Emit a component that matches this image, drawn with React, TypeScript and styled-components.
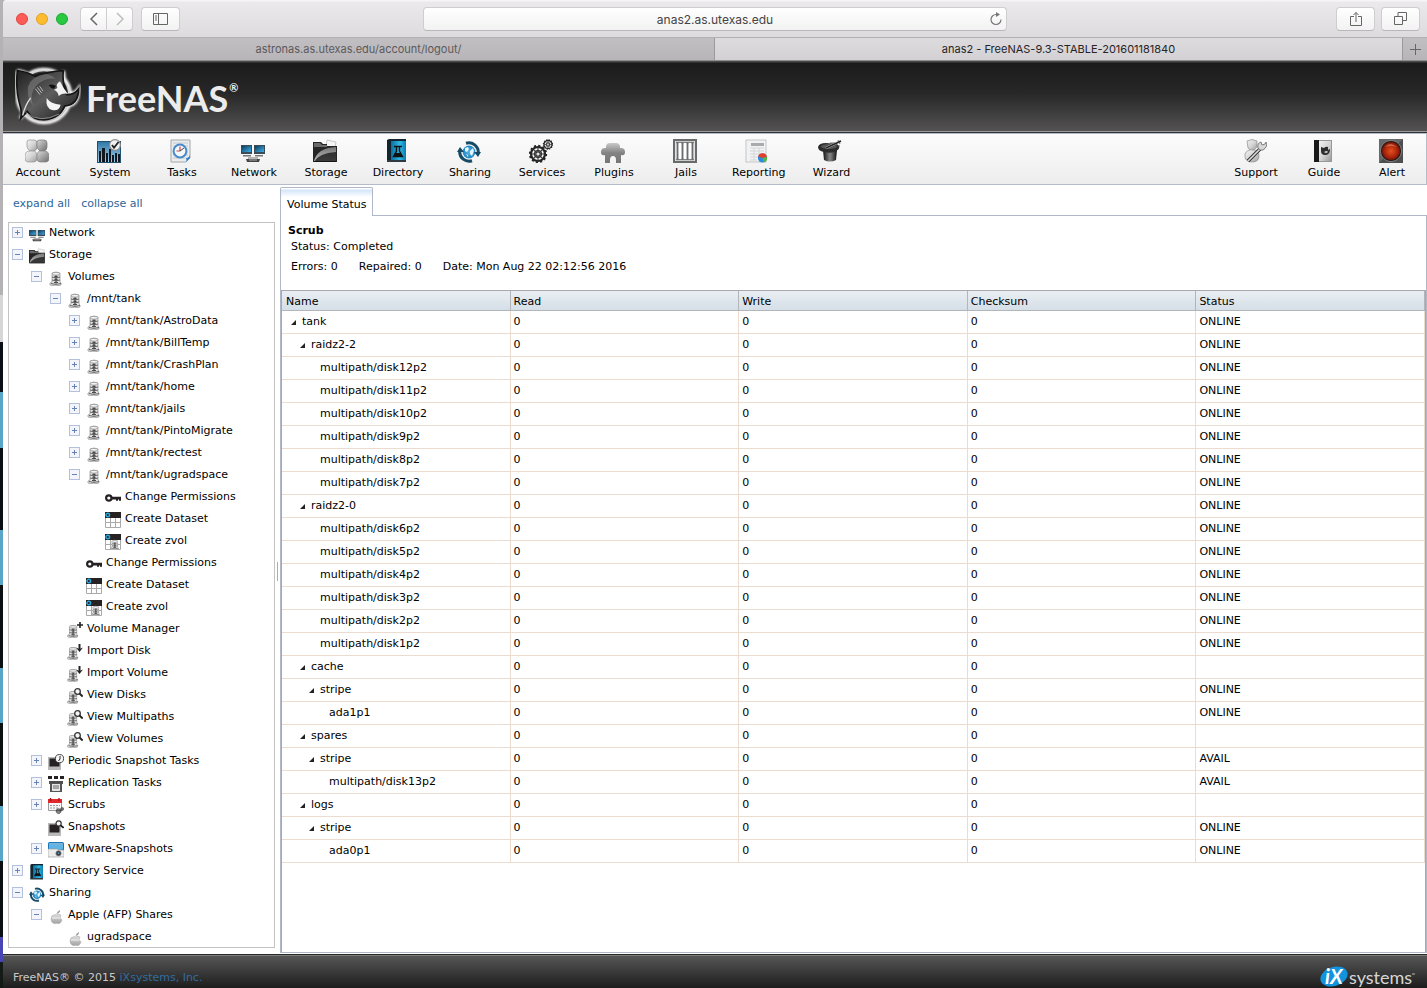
import React from 'react';
import styled, { createGlobalStyle } from 'styled-components';

const GlobalStyle = createGlobalStyle`
  * { box-sizing: border-box; }
  html, body { margin: 0; padding: 0; }
  body { font-family: Verdana, "DejaVu Sans", sans-serif; font-size: 11px; line-height: 15px; color: #000; background: #fff; }
  button, input { font: inherit; color: inherit; }
  a { text-decoration: none; }
`;

/* ---------- shell ---------- */

const Desktop = styled.div`
  display: flex;
  height: 100vh;
  min-height: 600px;
  padding-left: 3px;
  background: linear-gradient(
    #b4b2b4 0 295px, #d6d6d6 295px 342px, #0d0f18 342px 392px, #5aa6c8 392px 448px,
    #0b1017 448px 530px, #5aa6c8 530px 585px, #0b1012 585px 668px, #5aa6c8 668px 723px,
    #0b1210 723px 806px, #5aa6c8 806px 861px, #0b1012 861px 937px, #4a45b5 937px 962px, #141a16 962px
  );
`;

const Window = styled.div`
  flex: 1;
  min-width: 0;
  display: flex;
  flex-direction: column;
  background: #fff;
  border-top-left-radius: 4px;
  overflow: hidden;
`;

/* ---------- browser chrome ---------- */

const BrowserBar = styled.div`
  display: grid;
  grid-template-columns: 12fr 17fr 12fr;
  align-items: center;
  height: 38px;
  flex: none;
  padding: 0 7px;
  border-bottom: 1px solid #b3b0b4;
  background: linear-gradient(#f6f4f6 0 1px, #ebe9eb 2px, #dddbdd);
`;

const ChromeGroup = styled.div<{ $end?: boolean }>`
  display: flex;
  align-items: center;
  gap: ${(p) => (p.$end ? '6px' : '8px')};
  padding-left: ${(p) => (p.$end ? '0' : '6px')};
  justify-content: ${(p) => (p.$end ? 'flex-end' : 'flex-start')};
`;

const Light = styled.button<{ $fill: string; $edge: string }>`
  width: 12px;
  height: 12px;
  padding: 0;
  border-radius: 50%;
  border: 1px solid ${(p) => p.$edge};
  background: ${(p) => p.$fill};
`;

const NavPair = styled.div`
  display: flex;
  margin-left: 4px;
`;

const ChromeButton = styled.button<{ $w: number; $side?: 'left' | 'right' }>`
  display: flex;
  align-items: center;
  justify-content: center;
  width: ${(p) => p.$w}px;
  height: 24px;
  padding: 0;
  border: 1px solid #cfcdcf;
  border-bottom-color: #b9b7b9;
  border-left-width: ${(p) => (p.$side === 'right' ? 0 : 1)}px;
  border-radius: ${(p) => (p.$side === 'left' ? '4px 0 0 4px' : p.$side === 'right' ? '0 4px 4px 0' : '4px')};
  background: linear-gradient(#fff, #f3f2f3);
`;

const AddressBox = styled.div`
  display: grid;
  align-items: center;
  position: relative;
`;

const Address = styled.input`
  width: 100%;
  height: 24px;
  padding: 1px 28px 0;
  text-align: center;
  font-family: Inter, sans-serif;
  font-size: 12px;
  color: #454345;
  border: 1px solid #cfcdcf;
  border-bottom-color: #b9b7b9;
  border-radius: 4px;
  background: linear-gradient(#fff, #f3f2f3);
`;

const Reload = styled.button`
  position: absolute;
  right: 4px;
  display: flex;
  padding: 0;
  border: 0;
  background: none;
`;

const BrowserTabs = styled.div`
  display: grid;
  grid-template-columns: 1fr 1fr;
  height: 23px;
  flex: none;
  font-family: Inter, sans-serif;
  font-size: 11px;
  border-bottom: 1px solid #8e8c8e;
`;

const TabGroup = styled.div`
  display: grid;
  grid-template-columns: 1fr 24px;
`;

const BrowserTab = styled.button<{ $active?: boolean }>`
  display: flex;
  align-items: center;
  justify-content: center;
  padding: 0;
  border: 0;
  border-right: 1px solid #9b999b;
  color: ${(p) => (p.$active ? '#262426' : '#5b595b')};
  background: ${(p) => (p.$active ? 'linear-gradient(#dddbdd, #d3d1d3)' : 'linear-gradient(#c2bfc2, #b8b5b8)')};
`;

const NewTab = styled(BrowserTab)`
  border-right: 0;
`;

/* ---------- application header ---------- */

const Header = styled.header`
  display: flex;
  align-items: center;
  gap: 5px;
  height: 72px;
  flex: none;
  padding-left: 12px;
  border-bottom: 1px solid #333;
  background: linear-gradient(#4a4a4a 0 1px, #1b1b1b 2px, #272727 45%, #545252 70px, #9a9a9a 70px);
`;

const Brand = styled.div`
  display: flex;
  align-items: flex-start;
  padding-top: 2px;
  font-family: Lato, sans-serif;
  font-size: 36px;
  line-height: 48px;
  font-weight: 700;
  color: #ececec;
`;

const Registered = styled.sup`
  font-size: 11px;
  line-height: 12px;
  padding: 8px 0 0 1px;
`;

const Toolbar = styled.nav`
  display: flex;
  justify-content: space-between;
  height: 52px;
  flex: none;
  padding-right: 1px;
  border: 1px solid #b5bcc9;
  border-left: 0;
  background: linear-gradient(#fcfcfc, #ededed);
`;

const ToolGroup = styled.div`
  display: flex;
  gap: 2px;
`;

const Tool = styled.button<{ $min: number }>`
  display: flex;
  flex-direction: column;
  align-items: center;
  gap: 2px;
  min-width: ${(p) => p.$min}px;
  padding: 5px 9px 0;
  border: 0;
  background: none;
`;

const ToolIcon = styled.span`
  display: flex;
  padding-right: 3px;
`;

/* ---------- sidebar ---------- */

const Main = styled.main`
  display: flex;
  flex: 1;
  min-height: 0;
`;

const Sidebar = styled.aside`
  display: flex;
  flex-direction: column;
  width: 272px;
  flex: none;
  padding: 11px 0 6px 5px;
`;

const TreeLinks = styled.div`
  display: flex;
  gap: 11px;
  padding: 0 5px 11px;
`;

const TreeLink = styled.a`
  color: #2b6699;
`;

const Tree = styled.ul`
  flex: 1;
  min-height: 0;
  margin: 0;
  padding: 0 0 0 3px;
  list-style: none;
  overflow: hidden;
  border: 1px solid #c3c3c3;
`;

const TreeRow = styled.li<{ $level: number }>`
  display: grid;
  grid-template-columns: 17px 16px 1fr;
  align-items: start;
  height: 22px;
  padding-top: 2px;
  padding-left: ${(p) => p.$level * 19}px;
`;

const Expando = styled.button`
  display: flex;
  width: 11px;
  margin-top: 2px;
  padding: 0;
  border: 0;
  background: none;
`;

const TreeIcon = styled.span`
  display: flex;
  grid-column: 2;
  padding-top: 1px;
`;

const TreeLabel = styled.span`
  grid-column: 3;
  padding-left: 4px;
  white-space: nowrap;
`;

const Splitter = styled.div`
  display: flex;
  align-items: center;
  width: 5px;
  flex: none;
  padding: 4px 0 0 2px;
  &::before {
    content: '';
    width: 1px;
    height: 19px;
    background: #a9acb8;
  }
`;

/* ---------- volume status ---------- */

const Content = styled.section`
  display: flex;
  flex-direction: column;
  flex: 1;
  min-width: 0;
  padding: 2px 0 1px;
`;

const PanelTab = styled.button`
  position: relative;
  align-self: flex-start;
  height: 29px;
  margin-bottom: -1px;
  padding: 4px 6px 0;
  border: 1px solid #b0b7c8;
  border-bottom: 0;
  border-radius: 2px 2px 0 0;
  background: linear-gradient(#fff 0 1px, #d3e5f8 2px, #fff 9px);
`;

const Panel = styled.div`
  display: flex;
  flex-direction: column;
  flex: 1;
  min-height: 0;
  border: 1px solid #b0b7c8;
`;

const Summary = styled.div`
  padding: 7px 7px 15px;
`;

const SummaryTitle = styled.h2`
  margin: 0;
  font-size: 11px;
  line-height: 16px;
`;

const SummaryLine = styled.div<{ $gap?: number }>`
  display: flex;
  gap: 21px;
  padding: ${(p) => p.$gap ?? 0}px 3px 0;
  line-height: 16px;
`;

const GridFrame = styled.div`
  flex: 1;
  min-height: 0;
  overflow: hidden;
  border: 1px solid #a9a9ad;
  border-bottom: 0;
`;

const Grid = styled.table`
  width: 100%;
  table-layout: fixed;
  border-collapse: separate;
  border-spacing: 0;
`;

const HeadCell = styled.th`
  padding: 3px 3px 1px;
  text-align: left;
  font-weight: 400;
  line-height: 15px;
  border-right: 1px solid #b2b6ba;
  border-bottom: 1px solid #b2b6ba;
  background: linear-gradient(#e9eef3, #d5dfe7);
  &:first-child { padding-left: 4px; }
`;

const Cell = styled.td`
  padding: 3px 3px 4px;
  line-height: 15px;
  height: 23px;
  border-right: 1px solid #ecdcd0;
  border-bottom: 1px solid #ecdcd0;
`;

const NameCell = styled.div<{ $level: number }>`
  display: grid;
  grid-template-columns: 11px 1fr;
  align-items: center;
  padding-left: ${(p) => 6 + p.$level * 9}px;
`;

const Twisty = styled.button`
  display: flex;
  padding: 2px 0 0;
  border: 0;
  background: none;
`;

const NameText = styled.span`
  grid-column: 2;
`;

/* ---------- footer ---------- */

const Footer = styled.footer`
  display: flex;
  justify-content: space-between;
  align-items: flex-end;
  height: 34px;
  flex: none;
  padding: 0 11px 0 10px;
  color: #c9c9c9;
  background: linear-gradient(#2a2a2a 0 1px, #7d7d7d 1px 2px, #565656 2px, #1d1d1d);
`;

const Copyright = styled.div`
  padding-bottom: 3px;
`;

const FooterLink = styled.a`
  color: #336c9f;
`;

const Vendor = styled.div`
  display: flex;
  align-items: flex-end;
`;

/* ---------- icons ---------- */

type IconName =
  | 'account' | 'system' | 'tasks' | 'network' | 'storage' | 'directory' | 'sharing' | 'services'
  | 'plugins' | 'jails' | 'reporting' | 'wizard' | 'support' | 'guide' | 'alert'
  | 'disk' | 'diskAdd' | 'diskImport' | 'diskView' | 'key' | 'dataset' | 'zvol'
  | 'periodic' | 'replication' | 'scrubs' | 'snapshots' | 'vmware' | 'apple';

const diskShape = (
  <g>
    <path d="M3 14v-2l2-1v-9q4-2 8 0v9l1 1v2q-5 2-11 0z" fill="#e3e3e3" stroke="#9a9a9a" strokeWidth=".8" />
    <ellipse cx="9" cy="2.8" rx="4" ry="1.3" fill="#fafafa" stroke="#8b8b8b" strokeWidth=".7" />
    <path d="M5 6q4 1.8 8 0M5 9q4 1.8 8 0M4 12.5q5 1.8 10 0" stroke="#555" strokeWidth=".9" fill="none" />
    <path d="M9 4.5v8M7.4 5.3h3.2M7.4 8.4h3.2M7 11.5h4" stroke="#4a4a4a" strokeWidth="1.2" />
  </g>
);

const smallDisk = <g transform="translate(-2 2.4) scale(.9)">{diskShape}</g>;

const gear = (cx: number, cy: number, r: number) => (
  <g>
    <circle cx={cx} cy={cy} r={r} fill="none" stroke="#252525" strokeWidth={r * 0.32} />
    <circle cx={cx} cy={cy} r={r * 1.17} fill="none" stroke="#252525" strokeWidth={r * 0.28} strokeDasharray={`${r * 0.3} ${r * 0.312}`} />
    <circle cx={cx} cy={cy} r={r * 0.5} fill="#777" stroke="#333" strokeWidth={r * 0.16} />
    <path d={`M${cx - r} ${cy}h${2 * r}M${cx} ${cy - r}v${2 * r}M${cx - r * 0.7} ${cy - r * 0.7}l${r * 1.4} ${r * 1.4}M${cx + r * 0.7} ${cy - r * 0.7}l${-r * 1.4} ${r * 1.4}`} stroke="#333" strokeWidth={r * 0.16} />
    <circle cx={cx} cy={cy} r={r * 0.22} fill="#e6e6e6" />
  </g>
);

const icons: Record<IconName, { size: number; body: React.ReactNode }> = {
  account: {
    size: 24,
    body: (
      <g>
        <path d="M2 3q0-2 2-2h5q3 0 3 3v4q0 3-3 4H5q-3-2-3-5z" fill="url(#silver)" stroke="#909090" strokeWidth=".7" />
        <path d="M12 3q0-2 3-2h4q3 0 3 3v4q0 3-3 4h-4q-3-2-3-5z" fill="url(#steel)" stroke="#777" strokeWidth=".7" />
        <path d="M0 17q0-5 5-5h3q4 0 4 5v2q0 4-3 4H3q-3 0-3-4z" fill="url(#silver)" stroke="#969696" strokeWidth=".7" />
        <path d="M12 17q0-5 4-5h3q5 0 5 5v2q0 4-3 4h-6q-3 0-3-4z" fill="url(#steel)" stroke="#848484" strokeWidth=".7" />
      </g>
    ),
  },
  system: {
    size: 24,
    body: (
      <g>
        <rect x="0" y="2" width="24" height="22" fill="#23506f" />
        <rect x="1" y="3" width="22" height="20" fill="url(#blue)" />
        <path d="M2 23V12h2v11zM5 23V9h3v14zM9 23v-9h2v9zM12 23V10h2v13zM15 23v-7h2v7zM18 23v-9h2v9zM21 23v-8h2v8z" fill="#111820" />
        <circle cx="18" cy="6" r="5.4" fill="#f1f1f1" stroke="#8b8b8b" strokeWidth="1.2" />
        <path d="M15 6l2 2.8L21.5 3" fill="none" stroke="#222" strokeWidth="1.8" />
      </g>
    ),
  },
  tasks: {
    size: 24,
    body: (
      <g>
        <path d="M2 1h19v18l-4 4H2z" fill="#eaecee" stroke="#a3a7aa" />
        <path d="M4 4h15M4 7h15M4 10h15M4 13h15M4 16h15M4 19h12" stroke="#c6cacd" />
        <circle cx="11" cy="12" r="6.4" fill="#f5f8fb" stroke="#4a8ac8" strokeWidth="2" />
        <path d="M11 12V7.5M11 12H7.5" stroke="#c44" strokeWidth="1.2" />
        <path d="M11 12l4-3" stroke="#444" strokeWidth="1" />
        <path d="M21 16v3l-4 4q1-2 0-4 3 0 4-3z" fill="#2f82cc" />
      </g>
    ),
  },
  network: {
    size: 24,
    body: (
      <g>
        <rect x="0" y="6" width="11" height="9" fill="#3b4c59" />
        <rect x="1" y="7" width="9" height="6" fill="url(#screen)" />
        <rect x="13" y="6" width="11" height="9" fill="#3b4c59" />
        <rect x="14" y="7" width="9" height="6" fill="url(#screen)" />
        <path d="M2 16h8v1.5H2zM14 16h8v1.5h-8z" fill="#777" />
        <path d="M7 18h10v2H7z" fill="#b5b5b5" />
        <path d="M5 20h14l-1 3H6z" fill="#444" />
        <path d="M8 21h8" stroke="#aaa" />
      </g>
    ),
  },
  storage: {
    size: 24,
    body: (
      <g>
        <path d="M13 7l1-6 9 2-1 6z" fill="#f5f5f5" stroke="#b5b5b5" strokeWidth=".7" />
        <path d="M0 3h8l2 2h4v2h10v16H0z" fill="#252525" />
        <path d="M1 4h6l2 2h5v2H1z" fill="#6a6a6a" />
        <path d="M1 22Q4 9 23 8v14z" fill="url(#folder)" />
        <path d="M1 23Q6 14 23 13v10z" fill="#111" opacity=".75" />
      </g>
    ),
  },
  directory: {
    size: 24,
    body: (
      <g>
        <path d="M2 1l2-1h17v23H2z" fill="#12252f" />
        <path d="M6 2h15v20H6z" fill="url(#book)" />
        <path d="M2 21h19v2H2z" fill="#2f3b41" />
        <path d="M9 7.500h8M11.500 8v4L8.500 17.500h9L14.500 12V8" fill="none" stroke="#111" strokeWidth="1.400" />
        <path d="M10.500 14h5l2 3.500h-9z" fill="#111" />
      </g>
    ),
  },
  sharing: {
    size: 24,
    body: (
      <g>
        <circle cx="12" cy="13" r="6.4" fill="url(#globe)" />
        <path d="M8 9l3-1 1 2-2 3-2-1zM13 12l3-3 1 3-2 5-2-2zM9 15l2 1v2z" fill="#e8f4fb" />
        <path d="M9 4.300A9.500 9.500 0 0 1 21.300 14" fill="none" stroke="#174a66" strokeWidth="3" />
        <path d="M15 21.800A9.500 9.500 0 0 1 2.700 12" fill="none" stroke="#174a66" strokeWidth="3" />
        <path d="M17 13h7l-3 5zM0 13h7L3 8z" fill="#174a66" />
      </g>
    ),
  },
  services: { size: 24, body: <g>{gear(9, 15, 7)}{gear(19, 5.5, 4)}</g> },
  plugins: {
    size: 24,
    body: (
      <path d="M5 8q0-4 4-4h6q4 0 4 4v1h1q4 0 4 4t-4 3v8h-5v-3q0-4-3-4t-3 4v3H4v-8q-4 1-4-3t4-4h1z" fill="url(#plug)" />
    ),
  },
  jails: {
    size: 24,
    body: (
      <g>
        <rect x="1" y="1" width="22" height="22" fill="#e2e2e2" stroke="#686a6c" strokeWidth="2" />
        <path d="M3 3.5h18M3 20.5h18" stroke="#808284" strokeWidth="1.4" />
        <path d="M4.500 3v18M9.500 3v18M14.500 3v18M19.500 3v18" stroke="#6a6c6e" strokeWidth="1.600" />
        <path d="M7 4v16M12 4v16M17 4v16" stroke="#fff" strokeWidth="2" />
      </g>
    ),
  },
  reporting: {
    size: 24,
    body: (
      <g>
        <rect x="1" y="1" width="20" height="22" fill="#f1f2f3" stroke="#c3c5c7" />
        <path d="M6 4h13v3H6z" fill="#a8abae" />
        <path d="M5 9h14M5 12h14M5 15h14M5 18h8M5 21h7M9 9v12M14 9v6" stroke="#d3d6d8" />
        <circle cx="17.5" cy="19" r="4.6" fill="#2f8be0" />
        <path d="M17.5 19l-4.4-1.6A4.6 4.6 0 0 1 22 18z" fill="#e2402b" />
        <path d="M17.5 19L22 18a4.6 4.6 0 0 1-3 5.3z" fill="#54b848" />
      </g>
    ),
  },
  wizard: {
    size: 24,
    body: (
      <g>
        <path d="M5 11h14l-1 10q-6 3-12 0z" fill="url(#hat)" />
        <path d="M0 8q1-4 8-4l11 1q5 4-1 7-4 3-12 1-6-1-6-5z" fill="#2c2c2c" />
        <ellipse cx="11" cy="7.500" rx="8" ry="2.600" fill="#555" />
        <path d="M8 9L23 2" stroke="#ddd" strokeWidth="2.400" />
        <path d="M8 9L23 2" stroke="#222" strokeWidth="1.500" />
        <path d="M12 4h5M18 7h4M20 1l2 4" stroke="#444" strokeWidth=".8" />
      </g>
    ),
  },
  support: {
    size: 24,
    body: (
      <g>
        <path d="M4 2q5-3 10 0v6q-4 6-9 1z" fill="url(#silver)" stroke="#8e8e8e" strokeWidth=".7" />
        <path d="M2 15q2-5 8-4 6 0 6 6t-7 6q-8 0-7-8z" fill="url(#silver)" stroke="#8e8e8e" strokeWidth=".7" />
        <path d="M5 22L17 10" stroke="#303030" strokeWidth="3.6" />
        <path d="M5 22L17 10" stroke="#dedede" strokeWidth="1.6" />
        <path d="M15 9q-1-5 3-6l1 3 3-1 1-2q2 5-3 8-3 1-5-2z" fill="#d7d7d7" stroke="#666" strokeWidth=".8" />
      </g>
    ),
  },
  guide: {
    size: 24,
    body: (
      <g>
        <path d="M3 1h18v22H3z" fill="#989898" />
        <path d="M8 2h12v20H8z" fill="url(#silver)" />
        <path d="M3 1h5v22H3z" fill="#191919" />
        <path d="M10 8l3 1q2-2 4-1v3l2-1q0 6-5 6-4 0-4-4z" fill="#2d2d2d" />
        <path d="M13 13q2 2 4 0-1-2-4 0z" fill="#ccc" />
      </g>
    ),
  },
  alert: {
    size: 24,
    body: (
      <g>
        <rect width="24" height="24" fill="#4c4e50" />
        <path d="M0 0h24L0 24z" fill="#787a7c" opacity=".6" />
        <circle cx="12" cy="12" r="10.6" fill="#2d1a14" stroke="#909294" strokeWidth=".8" />
        <circle cx="12" cy="12" r="9" fill="url(#lamp)" />
        <path d="M6 8q5-6 12 0-6-2-12 0z" fill="#e28a68" opacity=".6" />
      </g>
    ),
  },
  disk: { size: 16, body: <g transform="translate(-1 1)">{diskShape}</g> },
  diskAdd: {
    size: 16,
    body: <g>{smallDisk}<path d="M10 3h6M13 0v6" stroke="#222" strokeWidth="1.6" /></g>,
  },
  diskImport: {
    size: 16,
    body: <g>{smallDisk}<path d="M12.5 0v5" stroke="#222" strokeWidth="2" /><path d="M9 3.5l3.5 4.5L16 3.5l-3.5 1.5z" fill="#222" /></g>,
  },
  diskView: {
    size: 16,
    body: <g>{smallDisk}<circle cx="10.5" cy="3.5" r="2.8" fill="#f5f5f5" stroke="#333" strokeWidth="1.3" /><path d="M12.5 5.5l3.2 3" stroke="#222" strokeWidth="2" /></g>,
  },
  key: {
    size: 16,
    body: (
      <g>
        <circle cx="3.8" cy="8" r="2.7" fill="none" stroke="#262122" strokeWidth="2.2" />
        <path d="M6 6.8h10v4h-2V9.6h-1v1.2h-2V9.6H6z" fill="#262122" />
      </g>
    ),
  },
  dataset: {
    size: 16,
    body: (
      <g>
        <path d="M.5 5.5h15v10H.5z" fill="#fff" stroke="#aaa" />
        <path d="M5.5 5v11M10.5 5v11M0 10.5h16" stroke="#aaa" />
        <path d="M0 0h16v6H0z" fill="#262122" />
        <circle cx="2.8" cy="3" r="1.8" fill="none" stroke="#28a8d8" strokeWidth="1.4" />
      </g>
    ),
  },
  zvol: {
    size: 16,
    body: (
      <g>
        <path d="M.5 5.5h15v10H.5z" fill="#fff" stroke="#aaa" />
        <path d="M5.5 5v11M0 10.5h16" stroke="#aaa" />
        <path d="M0 0h16v6H0z" fill="#262122" />
        <circle cx="2.8" cy="3" r="1.8" fill="none" stroke="#28a8d8" strokeWidth="1.4" />
        <g transform="translate(3.5 5.5) scale(.7)">{diskShape}</g>
      </g>
    ),
  },
  periodic: {
    size: 16,
    body: (
      <g>
        <path d="M0 3h13v13H0z" fill="#b9b9b9" />
        <path d="M1.5 4.5h10v8h-10z" fill="#262122" />
        <circle cx="11.5" cy="4.6" r="4.1" fill="#f7f7f7" stroke="#333" strokeWidth=".9" />
        <path d="M12 2v3l-1.5 2" stroke="#222" fill="none" />
      </g>
    ),
  },
  replication: {
    size: 16,
    body: (
      <g>
        <path d="M0 0h4v3H0zM6 0h4v3H6zM12 0h4v3h-4z" fill="#262122" />
        <path d="M1 5h14v3H1z" fill="#4d4d4d" />
        <path d="M2 7h12v9H2z" fill="#555" />
        <path d="M4 8h8v7H4z" fill="#e6e6e6" />
        <path d="M5 10h6M5 12h6" stroke="#666" />
      </g>
    ),
  },
  scrubs: {
    size: 16,
    body: (
      <g>
        <path d="M.5 4.5h13v8H.5z" fill="#f7f7f7" stroke="#999" />
        <path d="M0 1h14v4H0z" fill="#e3282b" />
        <path d="M2.5 0v3M11 0v3" stroke="#a5191b" strokeWidth="1.4" />
        <path d="M2 7.500h10M2 10h8" stroke="#9a9a9a" strokeDasharray="2 1" />
        <g transform="translate(9.500 11) scale(.36)">{gear(3, 6, 6)}{gear(13, 0, 4)}</g>
      </g>
    ),
  },
  snapshots: {
    size: 16,
    body: (
      <g>
        <path d="M0 3h13v13H0z" fill="#b9b9b9" />
        <path d="M1.5 4.5h10v8h-10z" fill="#262122" />
        <circle cx="10.6" cy="3.4" r="2.6" fill="#f5f5f5" stroke="#333" strokeWidth="1.2" />
        <path d="M12.5 5.2l3 2.6" stroke="#222" strokeWidth="1.8" />
      </g>
    ),
  },
  vmware: {
    size: 16,
    body: (
      <g>
        <rect width="16" height="14" rx="1.5" fill="#1a78bd" />
        <path d="M1 3h14v4q-7 3-14 0z" fill="#5fb4e6" />
        <path d="M1 2h14" stroke="#d6ecf8" />
        <path d="M0 7h9l2 1h5v7H0z" fill="#ececec" stroke="#999" strokeWidth=".6" />
        <circle cx="10.5" cy="11.3" r="2.6" fill="#333" stroke="#888" strokeWidth=".8" />
        <circle cx="10.5" cy="11.3" r="1" fill="#4e9ad2" />
      </g>
    ),
  },
  apple: {
    size: 16,
    body: (
      <g transform="translate(1 2)">
        <path d="M8 4.800q2-1 4 .2-2.200 2.500 1 5-1 3-2.500 3.500-1 .3-2.500-.3-2 .6-3 .3Q2 12.500 2 9q0-4 4-4.400z" fill="url(#fruit)" stroke="#a5a5a5" strokeWidth=".5" />
        <path d="M7.500 4Q8 1.500 11 0q.3 3-3.500 4z" fill="#9a9a9a" />
        <path d="M3 8h8" stroke="#fff" strokeWidth=".8" />
      </g>
    ),
  },
};

const IconDefs = () => (
  <svg width="0" height="0" style={{ position: 'absolute' }} aria-hidden="true">
    <defs>
      <linearGradient id="silver" x1="0" y1="0" x2="1" y2="1">
        <stop offset="0" stopColor="#f2f2f2" /><stop offset=".5" stopColor="#d5d5d5" /><stop offset="1" stopColor="#9b9b9b" />
      </linearGradient>
      <linearGradient id="steel" x1="0" y1="0" x2="1" y2="1">
        <stop offset="0" stopColor="#d9d9d9" /><stop offset="1" stopColor="#6d6d6d" />
      </linearGradient>
      <linearGradient id="blue" x1="0" y1="0" x2="0" y2="1">
        <stop offset="0" stopColor="#3079a8" /><stop offset="1" stopColor="#9fd0ea" />
      </linearGradient>
      <linearGradient id="screen" x1="0" y1="0" x2="1" y2="1">
        <stop offset="0" stopColor="#0d3a5c" /><stop offset="1" stopColor="#3fb0ea" />
      </linearGradient>
      <linearGradient id="folder" x1="0" y1="0" x2="0" y2="1">
        <stop offset="0" stopColor="#777" /><stop offset="1" stopColor="#b5b5b5" />
      </linearGradient>
      <linearGradient id="book" x1="0" y1="0" x2="1" y2="0">
        <stop offset="0" stopColor="#0a6f9f" /><stop offset=".6" stopColor="#2fb7e6" /><stop offset="1" stopColor="#0c7bac" />
      </linearGradient>
      <radialGradient id="globe">
        <stop offset="0" stopColor="#59b6e6" /><stop offset="1" stopColor="#1e86c2" />
      </radialGradient>
      <linearGradient id="plug" x1="0" y1="0" x2="0" y2="1">
        <stop offset="0" stopColor="#c9c9c9" /><stop offset=".5" stopColor="#828282" /><stop offset="1" stopColor="#767676" />
      </linearGradient>
      <linearGradient id="fruit" x1="0" y1="0" x2="0" y2="1">
        <stop offset="0" stopColor="#dedede" /><stop offset="1" stopColor="#a2a2a2" />
      </linearGradient>
      <linearGradient id="hat" x1="0" y1="0" x2="1" y2="0">
        <stop offset="0" stopColor="#111" /><stop offset=".5" stopColor="#888" /><stop offset="1" stopColor="#111" />
      </linearGradient>
      <radialGradient id="lamp">
        <stop offset="0" stopColor="#e2511f" /><stop offset=".6" stopColor="#b62a0d" /><stop offset="1" stopColor="#7a1507" />
      </radialGradient>
      <linearGradient id="hide" x1="0" y1="0" x2="1" y2="1">
        <stop offset="0" stopColor="#1e1e1e" /><stop offset=".5" stopColor="#5d5d5d" /><stop offset="1" stopColor="#161616" />
      </linearGradient>
      <filter id="glow" x="-20%" y="-20%" width="140%" height="140%"><feGaussianBlur stdDeviation="3" /></filter>
    </defs>
  </svg>
);

const Icon = ({ name, size }: { name: IconName; size: number }) => {
  const { size: box, body } = icons[name];
  return (
    <svg width={size} height={size} viewBox={`0 0 ${box} ${box}`} fill="none" aria-hidden="true">
      {body}
    </svg>
  );
};

const Mascot = () => (
  <svg width="66" height="62" viewBox="45 200 198 186" fill="none" aria-hidden="true">
    <g filter="url(#glow)" stroke="#fff" strokeWidth="10">
      <circle cx="132" cy="290" r="80" />
      <path d="M52 214Q78 218 104 236M52 214q-8 50 6 100M190 214l8 72q26 0 38-18 0 50-38 52M62 358l18-44" />
    </g>
    <circle cx="132" cy="288" r="75" fill="#3a3a3a" stroke="#d6d6d6" strokeWidth="5" />
    <circle cx="132" cy="290" r="67" stroke="#1b1b1b" strokeWidth="7" />
    <path d="M52 214q32 4 54 18 40-16 84-18-4 40 10 72 24 0 36-18 0 48-42 52-14 38-62 42-34 0-50-26l-20 22q4-24-2-40-14-48-8-104z" fill="url(#hide)" stroke="#151515" strokeWidth="5" />
    <path d="M84 262q12-34 54-38 16 2 28 14-34-4-58 22-22 26-8 60-20-20-16-58z" fill="#8a8a8a" opacity=".5" />
    <path d="M92 296q-16 20-24 52" stroke="#d9d9d9" strokeWidth="4" />
    <path d="M106 268l14 18M112 264l13 17M119 261l10 14" stroke="#b9b9b9" strokeWidth="3" />
    <path d="M180 246q-14 8-8 20l-10 6q12 4 14 18 12-10 28-6-14-16-24-38z" fill="#f2f2f2" />
    <path d="M146 258q10-6 22 2l-6 8q-8 2-16-10z" fill="#111" />
    <path d="M140 296q12 18 42 20-4 20-26 16-20-6-16-36z" fill="#f4f4f4" />
    <path d="M78 340q40 34 100 4" stroke="#aaa" strokeWidth="3" opacity=".7" />
  </svg>
);

const VendorLogo = () => (
  <svg width="96" height="23" viewBox="0 0 96 23" role="img" aria-label="iXsystems">
    <ellipse cx="14" cy="11.500" rx="14" ry="9.500" transform="rotate(-18 14 11.500)" fill="#1193dd" />
    <text x="5" y="19" fontFamily="Lato, sans-serif" fontSize="20" fontWeight="700" fontStyle="italic" fill="#fff">iX</text>
    <text x="29" y="19" fontFamily="Lato, sans-serif" fontSize="18" fill="#d6d6d6">systems</text>
    <path d="M92 9h3" stroke="#bbb" />
  </svg>
);

/* ---------- data ---------- */

const mainTools: [string, IconName][] = [
  ['Account', 'account'], ['System', 'system'], ['Tasks', 'tasks'], ['Network', 'network'],
  ['Storage', 'storage'], ['Directory', 'directory'], ['Sharing', 'sharing'], ['Services', 'services'],
  ['Plugins', 'plugins'], ['Jails', 'jails'], ['Reporting', 'reporting'], ['Wizard', 'wizard'],
];

const sideTools: [string, IconName][] = [['Support', 'support'], ['Guide', 'guide'], ['Alert', 'alert']];

type Toggle = '+' | '-' | '';

const treeRows: [number, Toggle, IconName, string][] = [
  [0, '+', 'network', 'Network'],
  [0, '-', 'storage', 'Storage'],
  [1, '-', 'disk', 'Volumes'],
  [2, '-', 'disk', '/mnt/tank'],
  [3, '+', 'disk', '/mnt/tank/AstroData'],
  [3, '+', 'disk', '/mnt/tank/BillTemp'],
  [3, '+', 'disk', '/mnt/tank/CrashPlan'],
  [3, '+', 'disk', '/mnt/tank/home'],
  [3, '+', 'disk', '/mnt/tank/jails'],
  [3, '+', 'disk', '/mnt/tank/PintoMigrate'],
  [3, '+', 'disk', '/mnt/tank/rectest'],
  [3, '-', 'disk', '/mnt/tank/ugradspace'],
  [4, '', 'key', 'Change Permissions'],
  [4, '', 'dataset', 'Create Dataset'],
  [4, '', 'zvol', 'Create zvol'],
  [3, '', 'key', 'Change Permissions'],
  [3, '', 'dataset', 'Create Dataset'],
  [3, '', 'zvol', 'Create zvol'],
  [2, '', 'diskAdd', 'Volume Manager'],
  [2, '', 'diskImport', 'Import Disk'],
  [2, '', 'diskImport', 'Import Volume'],
  [2, '', 'diskView', 'View Disks'],
  [2, '', 'diskView', 'View Multipaths'],
  [2, '', 'diskView', 'View Volumes'],
  [1, '+', 'periodic', 'Periodic Snapshot Tasks'],
  [1, '+', 'replication', 'Replication Tasks'],
  [1, '+', 'scrubs', 'Scrubs'],
  [1, '', 'snapshots', 'Snapshots'],
  [1, '+', 'vmware', 'VMware-Snapshots'],
  [0, '+', 'directory', 'Directory Service'],
  [0, '-', 'sharing', 'Sharing'],
  [1, '-', 'apple', 'Apple (AFP) Shares'],
  [2, '', 'apple', 'ugradspace'],
];

const disk = (n: number): [number, boolean, string, string] => [2, false, `multipath/disk${n}p2`, 'ONLINE'];

const volumeRows: [number, boolean, string, string][] = [
  [0, true, 'tank', 'ONLINE'],
  [1, true, 'raidz2-2', 'ONLINE'],
  ...[12, 11, 10, 9, 8, 7].map(disk),
  [1, true, 'raidz2-0', 'ONLINE'],
  ...[6, 5, 4, 3, 2, 1].map(disk),
  [1, true, 'cache', ''],
  [2, true, 'stripe', 'ONLINE'],
  [3, false, 'ada1p1', 'ONLINE'],
  [1, true, 'spares', ''],
  [2, true, 'stripe', 'AVAIL'],
  [3, false, 'multipath/disk13p2', 'AVAIL'],
  [1, true, 'logs', ''],
  [2, true, 'stripe', 'ONLINE'],
  [3, false, 'ada0p1', 'ONLINE'],
];

/* ---------- page ---------- */

const BrowserChrome = () => (
  <>
    <BrowserBar>
      <ChromeGroup>
        <Light $fill="#fc5b57" $edge="#e2463f" aria-label="Close" />
        <Light $fill="#fdbc2e" $edge="#e0a028" aria-label="Minimize" />
        <Light $fill="#28c840" $edge="#1dab2f" aria-label="Zoom" />
        <NavPair>
          <ChromeButton $w={27} $side="left" aria-label="Back">
            <svg width="8" height="14" fill="none"><path d="M7 1L1 7l6 6" stroke="#666" strokeWidth="1.500" /></svg>
          </ChromeButton>
          <ChromeButton $w={26} $side="right" aria-label="Forward">
            <svg width="8" height="14" fill="none"><path d="M1 1l6 6-6 6" stroke="#bdbdbd" strokeWidth="1.500" /></svg>
          </ChromeButton>
        </NavPair>
        <ChromeButton $w={39} aria-label="Show sidebar">
          <svg width="15" height="12" fill="none" stroke="#666">
            <path d="M.5.5h14v11H.5zM5.500.5v11M2 3h2M2 5h2M2 7h2" />
          </svg>
        </ChromeButton>
      </ChromeGroup>
      <AddressBox>
        <Address aria-label="Address" defaultValue="anas2.as.utexas.edu" />
        <Reload aria-label="Reload">
          <svg width="14" height="14" fill="none">
            <path d="M7 2.500a5 5 0 1 0 5 5" stroke="#777" strokeWidth="1.200" />
            <path d="M7 0l4 2.500L7 5z" fill="#777" />
          </svg>
        </Reload>
      </AddressBox>
      <ChromeGroup $end>
        <ChromeButton $w={39} aria-label="Share">
          <svg width="12" height="16" fill="none" stroke="#666">
            <path d="M4 5.500H.5v9h11v-9H8M6 11V1.500M3.500 4L6 1.500 8.500 4" />
          </svg>
        </ChromeButton>
        <ChromeButton $w={39} aria-label="Show all tabs">
          <svg width="13" height="13" fill="none" stroke="#666">
            <path d="M.5 4.500h8v8h-8zM4 4.500v-4h8.500v8H9" />
          </svg>
        </ChromeButton>
      </ChromeGroup>
    </BrowserBar>
    <BrowserTabs>
      <BrowserTab>astronas.as.utexas.edu/account/logout/</BrowserTab>
      <TabGroup>
        <BrowserTab $active>anas2 - FreeNAS-9.3-STABLE-201601181840</BrowserTab>
        <NewTab aria-label="New tab">
          <svg width="11" height="11" stroke="#666"><path d="M5.500 0v11M0 5.500h11" /></svg>
        </NewTab>
      </TabGroup>
    </BrowserTabs>
  </>
);

const ExpandoIcon = ({ open }: { open: boolean }) => (
  <svg width="11" height="11" fill="none">
    <rect x=".5" y=".5" width="10" height="10" fill="#f3f5fa" stroke="#b4c1dc" />
    <path d={open ? 'M3 5.500h5' : 'M3 5.500h5M5.500 3v5'} stroke="#6583b5" />
  </svg>
);

export default function App() {
  return (
    <Desktop>
      <GlobalStyle />
      <IconDefs />
      <Window>
        <BrowserChrome />
        <Header>
          <Mascot />
          <Brand>FreeNAS<Registered>®</Registered></Brand>
        </Header>
        <Toolbar>
          <ToolGroup>
            {mainTools.map(([label, icon]) => (
              <Tool key={label} $min={70}><ToolIcon><Icon name={icon} size={24} /></ToolIcon>{label}</Tool>
            ))}
          </ToolGroup>
          <ToolGroup>
            {sideTools.map(([label, icon]) => (
              <Tool key={label} $min={66}><ToolIcon><Icon name={icon} size={24} /></ToolIcon>{label}</Tool>
            ))}
          </ToolGroup>
        </Toolbar>
        <Main>
          <Sidebar>
            <TreeLinks>
              <TreeLink href="#expand">expand all</TreeLink>
              <TreeLink href="#collapse">collapse all</TreeLink>
            </TreeLinks>
            <Tree>
              {treeRows.map(([level, toggle, icon, label], i) => (
                <TreeRow key={i} $level={level}>
                  {toggle && (
                    <Expando aria-label={`${toggle === '-' ? 'Collapse' : 'Expand'} ${label}`}>
                      <ExpandoIcon open={toggle === '-'} />
                    </Expando>
                  )}
                  <TreeIcon><Icon name={icon} size={16} /></TreeIcon>
                  <TreeLabel>{label}</TreeLabel>
                </TreeRow>
              ))}
            </Tree>
          </Sidebar>
          <Splitter />
          <Content>
            <PanelTab>Volume Status</PanelTab>
            <Panel>
              <Summary>
                <SummaryTitle>Scrub</SummaryTitle>
                <SummaryLine>Status: Completed</SummaryLine>
                <SummaryLine $gap={4}>
                  <span>Errors: 0</span>
                  <span>Repaired: 0</span>
                  <span>Date: Mon Aug 22 02:12:56 2016</span>
                </SummaryLine>
              </Summary>
              <GridFrame>
                <Grid>
                  <thead>
                    <tr>
                      {['Name', 'Read', 'Write', 'Checksum', 'Status'].map((h) => (
                        <HeadCell key={h} scope="col">{h}</HeadCell>
                      ))}
                    </tr>
                  </thead>
                  <tbody>
                    {volumeRows.map(([level, parent, name, status], i) => (
                      <tr key={i}>
                        <Cell>
                          <NameCell $level={level}>
                            {parent && (
                              <Twisty aria-label={`Collapse ${name}`}>
                                <svg width="5" height="5"><path d="M5 0v5H0z" fill="#222" /></svg>
                              </Twisty>
                            )}
                            <NameText>{name}</NameText>
                          </NameCell>
                        </Cell>
                        <Cell>0</Cell>
                        <Cell>0</Cell>
                        <Cell>0</Cell>
                        <Cell>{status}</Cell>
                      </tr>
                    ))}
                  </tbody>
                </Grid>
              </GridFrame>
            </Panel>
          </Content>
        </Main>
        <Footer>
          <Copyright>FreeNAS® © 2015 <FooterLink href="#ixsystems">iXsystems, Inc.</FooterLink></Copyright>
          <Vendor><VendorLogo /></Vendor>
        </Footer>
      </Window>
    </Desktop>
  );
}
